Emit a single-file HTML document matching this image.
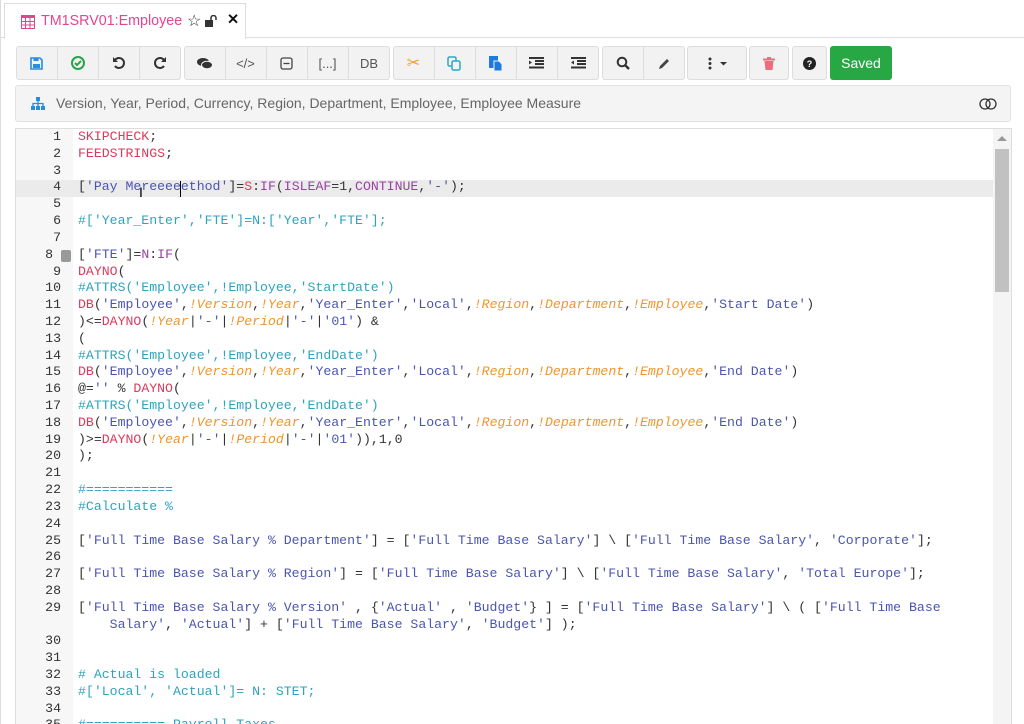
<!DOCTYPE html>
<html><head><meta charset="utf-8"><style>
*{box-sizing:border-box;margin:0;padding:0}
html,body{width:1024px;height:724px;overflow:hidden}
body{background:#fff;font-family:"Liberation Sans",sans-serif;position:relative}
.topline{position:absolute;left:0;top:37px;width:1024px;height:1px;background:#ddd}
.lb{position:absolute;left:0;top:0;width:1px;height:724px;background:#ddd}
.tab{position:absolute;left:4px;top:3px;width:242px;height:36px;border:1px solid #ddd;border-bottom:none;background:#fff;font-size:14.3px;color:#e4458f}
.tab span{position:absolute;top:9px}
.btn{position:absolute;top:46px;height:34px;background:#f2f2f2;border:1px solid #ddd;border-radius:3px}
.b{position:absolute;top:46px;height:34px;width:1px;background:#ddd}
.ic{position:absolute;top:46px;height:34px;display:flex;align-items:center;justify-content:center;font-size:13px;color:#333}
.saved{position:absolute;left:830px;top:46px;width:62px;height:34px;background:#28a745;border-radius:3px;color:#fff;font-size:14px;display:flex;align-items:center;justify-content:center}
.info{position:absolute;left:15px;top:85px;width:996px;height:37px;background:#f4f4f4;border:1px solid #e2e2e2;border-radius:3px;font-size:14px;color:#666}
.ed{position:absolute;left:15px;top:128px;width:997px;height:600px;border:1px solid #ddd;border-bottom:none}
.gut{position:absolute;left:16px;top:129px;width:57px;height:600px;background:#f7f7f7}
.hl{position:absolute;left:16px;top:180px;width:977px;height:17px;background:#ebebeb}
.nums,.code{position:absolute;top:129px;font-family:"Liberation Mono",monospace;font-size:13.2px;line-height:16.82px;white-space:pre;color:#333}
.nums{left:16px;width:45px;text-align:right}
.code{left:78px}
.k{color:#dc3a5d}.s{color:#4b55b0}.c{color:#2ea3bd}.v{color:#f0952b;font-style:italic}.p{color:#9b3ea5}
.sb{position:absolute;left:993px;top:129px;width:18px;height:600px;background:#f4f4f4}
.th{position:absolute;left:995px;top:149px;width:14px;height:143px;background:#c1c1c1}
</style></head><body>
<div class="lb"></div>
<div class="topline"></div>
<div class="tab">
<svg style="position:absolute;left:16px;top:11px" width="14" height="14" viewBox="0 0 14 14"><rect x="0.5" y="0.5" width="13" height="13" fill="none" stroke="#e4458f"/><rect x="0" y="0" width="14" height="3" fill="#e4458f"/><path d="M0 6.5H14M0 10H14M4.5 3V14M9 3V14" stroke="#e4458f"/></svg>
<span style="left:36px">TM1SRV01:Employee</span>
<span style="left:182px;color:#333;top:7px;font-size:16px">☆</span>
<svg style="position:absolute;left:200px;top:11px" width="12" height="12" viewBox="0 0 12 12"><rect x="0" y="5" width="8" height="7" fill="#333"/><path d="M6 5V3a2.5 2.5 0 0 1 5 0v2" fill="none" stroke="#333" stroke-width="1.5"/></svg>
<span style="left:222px;color:#111;font-weight:bold;top:8px">✕</span>
</div>

<div class="btn" style="left:16px;width:165px"></div>
<div class="btn" style="left:184px;width:206px"></div>
<div class="btn" style="left:393px;width:206px"></div>
<div class="btn" style="left:602px;width:83px"></div>
<div class="btn" style="left:687px;width:60px"></div>
<div class="btn" style="left:749px;width:40px"></div>
<div class="btn" style="left:792px;width:35px"></div>
<div class="b" style="left:57px"></div><div class="b" style="left:98px"></div><div class="b" style="left:139px"></div>
<div class="b" style="left:225px"></div><div class="b" style="left:266px"></div><div class="b" style="left:307px"></div><div class="b" style="left:348px"></div>
<div class="b" style="left:434px"></div><div class="b" style="left:475px"></div><div class="b" style="left:516px"></div><div class="b" style="left:557px"></div>
<div class="b" style="left:643px"></div>

<div class="ic" style="left:16px;width:41px"><svg width="13" height="13" viewBox="0 0 13 13"><path d="M1 1h9l2 2v9H1z" fill="none" stroke="#2a8ce0" stroke-width="1.6"/><rect x="3.5" y="1" width="5" height="3" fill="#2a8ce0"/><rect x="3" y="7" width="7" height="4" fill="#2a8ce0"/></svg></div>
<div class="ic" style="left:57px;width:41px"><svg width="14" height="14" viewBox="0 0 14 14"><circle cx="7" cy="7" r="6" fill="none" stroke="#2aa34a" stroke-width="2"/><path d="M4 7l2 2 4-4" fill="none" stroke="#2aa34a" stroke-width="2"/></svg></div>
<div class="ic" style="left:98px;width:41px"><svg width="14" height="14" viewBox="0 0 14 14"><path d="M3 4A5 5 0 1 1 3 10" fill="none" stroke="#333" stroke-width="2"/><path d="M1 1v5h5z" fill="#333"/></svg></div>
<div class="ic" style="left:139px;width:41px"><svg width="14" height="14" viewBox="0 0 14 14"><path d="M11 4A5 5 0 1 0 11 10" fill="none" stroke="#333" stroke-width="2"/><path d="M13 1v5H8z" fill="#333"/></svg></div>
<div class="ic" style="left:184px;width:41px"><svg width="16" height="13" viewBox="0 0 16 13"><ellipse cx="6" cy="5" rx="6" ry="4" fill="#333"/><ellipse cx="10" cy="8" rx="5.5" ry="3.8" fill="#333" stroke="#f2f2f2"/></svg></div>
<div class="ic" style="left:225px;width:41px;color:#555">&lt;/&gt;</div>
<div class="ic" style="left:266px;width:41px"><svg width="13" height="13" viewBox="0 0 13 13"><rect x="1" y="1" width="11" height="11" rx="2" fill="none" stroke="#444" stroke-width="1.3"/><path d="M3.5 6.5h6" stroke="#444" stroke-width="1.3"/></svg></div>
<div class="ic" style="left:307px;width:41px;color:#555">[...]</div>
<div class="ic" style="left:348px;width:42px;color:#555">DB</div>
<div class="ic" style="left:393px;width:41px;color:#f39c2a;font-size:16px">✂</div>
<div class="ic" style="left:434px;width:41px"><svg width="15" height="15" viewBox="0 0 15 15"><rect x="1" y="1" width="8" height="9" rx="1.5" fill="none" stroke="#2aa7c8" stroke-width="1.5"/><rect x="5" y="5" width="8" height="9" rx="1.5" fill="#f2f2f2" stroke="#2aa7c8" stroke-width="1.5"/></svg></div>
<div class="ic" style="left:475px;width:41px"><svg width="14" height="15" viewBox="0 0 14 15"><rect x="0" y="0" width="9" height="12" fill="#1e7ae0"/><path d="M5 5h5l3 3v7H5z" fill="#1e7ae0" stroke="#f2f2f2"/></svg></div>
<div class="ic" style="left:516px;width:41px"><svg width="15" height="12" viewBox="0 0 15 12"><path d="M0 1h15M6 4h9M6 7h9M0 10.5h15" stroke="#333" stroke-width="2"/><path d="M0 3.5l3 2-3 2z" fill="#333"/></svg></div>
<div class="ic" style="left:557px;width:42px"><svg width="15" height="12" viewBox="0 0 15 12"><path d="M0 1h15M6 4h9M6 7h9M0 10.5h15" stroke="#333" stroke-width="2"/><path d="M3 3.5l-3 2 3 2z" fill="#333"/></svg></div>
<div class="ic" style="left:602px;width:41px"><svg width="14" height="14" viewBox="0 0 14 14"><circle cx="6" cy="6" r="4.3" fill="none" stroke="#333" stroke-width="2"/><path d="M9 9l4 4" stroke="#333" stroke-width="2.4"/></svg></div>
<div class="ic" style="left:643px;width:42px"><svg width="13" height="13" viewBox="0 0 13 13"><path d="M1 12l1-3 7-7 2 2-7 7z" fill="#444"/></svg></div>
<div class="ic" style="left:687px;width:60px"><svg width="30" height="13" viewBox="0 0 30 13"><circle cx="8" cy="2" r="1.5" fill="#333"/><circle cx="8" cy="6.5" r="1.5" fill="#333"/><circle cx="8" cy="11" r="1.5" fill="#333"/><path d="M18 5h7l-3.5 3.5z" fill="#333"/></svg></div>
<div class="ic" style="left:749px;width:40px"><svg width="12" height="13" viewBox="0 0 12 13"><rect x="0" y="1.5" width="12" height="2" fill="#ef6b7f"/><rect x="4" y="0" width="4" height="2" fill="#ef6b7f"/><path d="M1.5 4h9l-1 9h-7z" fill="#ef6b7f"/></svg></div>
<div class="ic" style="left:792px;width:35px"><svg width="13" height="13" viewBox="0 0 13 13"><circle cx="6.5" cy="6.5" r="6.5" fill="#222"/><text x="6.5" y="10" text-anchor="middle" font-size="9" font-weight="bold" fill="#fff" font-family="Liberation Sans">?</text></svg></div>
<div class="saved">Saved</div>

<div class="info">
<svg style="position:absolute;left:15px;top:11px" width="14" height="13" viewBox="0 0 14 13"><rect x="5" y="0" width="4" height="4" fill="#2a8ce0"/><rect x="0" y="9" width="4" height="4" fill="#2a8ce0"/><rect x="5" y="9" width="4" height="4" fill="#2a8ce0"/><rect x="10" y="9" width="4" height="4" fill="#2a8ce0"/><path d="M7 4v5M2 9V6.5h10V9" fill="none" stroke="#2a8ce0" stroke-width="1.3"/></svg>
<span style="position:absolute;left:40px;top:9px">Version, Year, Period, Currency, Region, Department, Employee, Employee Measure</span>
<svg style="position:absolute;left:963px;top:12px" width="18" height="12" viewBox="0 0 18 12"><circle cx="6" cy="6" r="5" fill="none" stroke="#333" stroke-width="1.3"/><circle cx="12" cy="6" r="5" fill="none" stroke="#333" stroke-width="1.3"/></svg>
</div>

<div class="ed"></div>
<div class="gut"></div>
<div class="hl"></div>
<div class="sb"></div><div class="th"></div>
<svg style="position:absolute;left:997px;top:135px" width="10" height="6"><path d="M0 6L5 1 10 6z" fill="#999"/></svg>
<div style="position:absolute;left:61px;top:250px;width:10px;height:12px;background:#999;border-radius:2px"></div>
<div class="nums">1
2
3
4
5
6
7
8 
9
10
11
12
13
14
15
16
17
18
19
20
21
22
23
24
25
26
27
28
29

30
31
32
33
34
35</div>
<div class="code"><span class="k">SKIPCHECK</span>;
<span class="k">FEEDSTRINGS</span>;

[<span class="s">'Pay Mereeeeethod'</span>]=<span class="k">S</span>:<span class="p">IF</span>(<span class="p">ISLEAF</span>=1,<span class="p">CONTINUE</span>,<span class="s">'-'</span>);

<span class="c">#['Year_Enter','FTE']=N:['Year','FTE'];</span>

[<span class="s">'FTE'</span>]=<span class="p">N</span>:<span class="p">IF</span>(
<span class="k">DAYNO</span>(
<span class="c">#ATTRS('Employee',!Employee,'StartDate')</span>
<span class="k">DB</span>(<span class="s">'Employee'</span>,<span class="v">!Version</span>,<span class="v">!Year</span>,<span class="s">'Year_Enter'</span>,<span class="s">'Local'</span>,<span class="v">!Region</span>,<span class="v">!Department</span>,<span class="v">!Employee</span>,<span class="s">'Start Date'</span>)
)&lt;=<span class="k">DAYNO</span>(<span class="v">!Year</span>|<span class="s">'-'</span>|<span class="v">!Period</span>|<span class="s">'-'</span>|<span class="s">'01'</span>) &amp;
(
<span class="c">#ATTRS('Employee',!Employee,'EndDate')</span>
<span class="k">DB</span>(<span class="s">'Employee'</span>,<span class="v">!Version</span>,<span class="v">!Year</span>,<span class="s">'Year_Enter'</span>,<span class="s">'Local'</span>,<span class="v">!Region</span>,<span class="v">!Department</span>,<span class="v">!Employee</span>,<span class="s">'End Date'</span>)
@=<span class="s">''</span> % <span class="k">DAYNO</span>(
<span class="c">#ATTRS('Employee',!Employee,'EndDate')</span>
<span class="k">DB</span>(<span class="s">'Employee'</span>,<span class="v">!Version</span>,<span class="v">!Year</span>,<span class="s">'Year_Enter'</span>,<span class="s">'Local'</span>,<span class="v">!Region</span>,<span class="v">!Department</span>,<span class="v">!Employee</span>,<span class="s">'End Date'</span>)
)&gt;=<span class="k">DAYNO</span>(<span class="v">!Year</span>|<span class="s">'-'</span>|<span class="v">!Period</span>|<span class="s">'-'</span>|<span class="s">'01'</span>)),1,0
);

<span class="c">#===========</span>
<span class="c">#Calculate %</span>

[<span class="s">'Full Time Base Salary % Department'</span>] = [<span class="s">'Full Time Base Salary'</span>] \ [<span class="s">'Full Time Base Salary'</span>, <span class="s">'Corporate'</span>];

[<span class="s">'Full Time Base Salary % Region'</span>] = [<span class="s">'Full Time Base Salary'</span>] \ [<span class="s">'Full Time Base Salary'</span>, <span class="s">'Total Europe'</span>];

[<span class="s">'Full Time Base Salary % Version'</span> , {<span class="s">'Actual'</span> , <span class="s">'Budget'</span>} ] = [<span class="s">'Full Time Base Salary'</span>] \ ( [<span class="s">'Full Time Base</span>
<span class="s">    Salary'</span>, <span class="s">'Actual'</span>] + [<span class="s">'Full Time Base Salary'</span>, <span class="s">'Budget'</span>] );


<span class="c"># Actual is loaded</span>
<span class="c">#['Local', 'Actual']= N: STET;</span>

<span class="c">#========== Payroll Taxes</span></div>
<div style="position:absolute;left:180px;top:181px;width:1px;height:16px;background:#000"></div>
<div style="position:absolute;left:139px;top:184px;font-size:14px;color:#000">I</div>
</body></html>
